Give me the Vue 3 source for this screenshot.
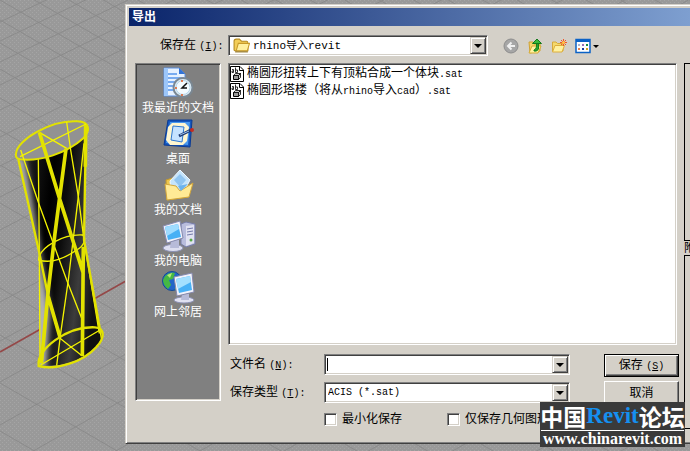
<script setup>
import { ref } from 'vue'

const files = [
  [{ t: '椭圆形扭转上下有顶粘合成一个体块' }, { t: '.sat', latin: true }],
  [
    { t: '椭圆形塔楼（将从' },
    { t: 'rhino', latin: true },
    { t: '导入' },
    { t: 'cad', latin: true },
    { t: '）' },
    { t: '.sat', latin: true },
  ],
]
const places = [
  { id: 'recent', name: '我最近的文档' },
  { id: 'desktop', name: '桌面' },
  { id: 'docs', name: '我的文档' },
  { id: 'computer', name: '我的电脑' },
  { id: 'network', name: '网上邻居' },
]
const fileName = ref('')

// Ground grid: spacing widens toward the viewer
const rising = []
for (let y = 22, step = 19; y < 900; y += step, step = Math.min(step + 2, 48)) {
  rising.push({ y1: y, y2: y - 690 * Math.min(0.47 + y / 4500, 0.57) })
}
const falling = []
for (let y = -400, step = 20; y < 460; y += step, step = y > 0 ? Math.min(step + 3, 48) : 20) {
  falling.push({ y1: y, y2: y + 690 * 0.58 })
}
</script>

<template>
  <div class="viewport">
    <svg class="ground" aria-hidden="true">
      <defs>
        <pattern id="grain" width="4" height="4" patternUnits="userSpaceOnUse">
          <rect width="1" height="1" fill="#a5a5a5" />
          <rect x="2" y="2" width="1" height="1" fill="#a5a5a5" />
        </pattern>
      </defs>
      <rect width="100%" height="100%" fill="#999" />
      <rect width="100%" height="100%" fill="url(#grain)" />
      <g stroke="#8b8b8b" stroke-width="1">
        <line v-for="(l, i) in rising" :key="'r' + i" x1="0" :y1="l.y1" x2="690" :y2="l.y2" />
        <line v-for="(l, i) in falling" :key="'f' + i" x1="0" :y1="l.y1" x2="690" :y2="l.y2" />
      </g>
      <line x1="0" y1="352" x2="140" y2="273" stroke="#944848" stroke-width="1.6" />
    </svg>

    <svg class="tower" viewBox="0 0 390 870" aria-hidden="true">
      <defs>
        <linearGradient id="shade" gradientUnits="userSpaceOnUse" x1="60" y1="430" x2="300" y2="460">
          <stop offset="0" stop-color="#1a1a1a" />
          <stop offset="0.3" stop-color="#000" />
          <stop offset="0.5" stop-color="#0c0c0c" />
          <stop offset="0.78" stop-color="#3c3c3c" />
          <stop offset="1" stop-color="#101010" />
        </linearGradient>
        <clipPath id="hull">
          <path d="M56 178 L118 460 L120 795 Q215 808 290 740 Q312 712 302 690 L252 420 L260 85 L200 145 Z" />
        </clipPath>
        <filter id="soft" x="-50%" y="-10%" width="200%" height="120%">
          <feGaussianBlur stdDeviation="9" />
        </filter>
      </defs>
      <g clip-path="url(#hull)">
        <rect x="40" y="60" width="280" height="760" fill="url(#shade)" />
        <path d="M40 170 L74 170 L122 460 L150 640 L140 810 L100 810 L110 460 Z" fill="#b4b4b4" filter="url(#soft)" />
      </g>
      <path class="cap" d="M48 160 C52 120 150 60 232 64 C270 66 272 90 250 115 C200 160 120 185 60 178 C50 176 46 170 48 160 Z" />
      <g class="wire thin">
        <path d="M60 170 L258 72 M118 97 L200 145 M200 66 L212 150 L235 290 L252 420 L298 700" />
        <path d="M62 150 L116 310 L200 540 L247 660" />
        <path d="M115 178 L118 460 L120 790" />
        <path d="M252 130 L235 290 L205 540 L182 700 L170 797" />
        <path d="M116 478 C120 440 190 402 248 405 C262 415 250 440 230 450 C190 478 150 490 116 480 Z" />
        <path d="M122 795 L300 690 L304 715 M180 715 L247 768" />
      </g>
      <g class="wire">
        <path d="M116 796 C108 750 200 678 285 682 C316 684 314 715 290 740 C250 785 170 812 116 798 Z" />
        <path d="M55 178 L116 450 L145 590 L180 712" />
        <path d="M258 75 L252 420 L302 700" />
      </g>
      <g class="wire thick">
        <path d="M118 97 L180 300 L250 520 M198 146 L165 400 L145 570 L124 790 M145 590 L180 712 M257 75 L256 200 M250 440 L247 768" />
      </g>
    </svg>

    <main class="dialog" role="dialog" aria-labelledby="dialog-title">
      <h1 id="dialog-title" class="title">导出</h1>
      <div class="toolbar">
        <label class="lookin" for="folder">保存在 <span class="latin">(<u>I</u>):</span></label>
        <div class="combo folder">
          <svg class="folder-icon" viewBox="0 0 16 14" aria-hidden="true">
            <path d="M1 3 Q1 1 3 1 H6 L8 3 H13 Q14 3 14 5 V12 H2 Q1 12 1 11Z" fill="#f3ce59" stroke="#b58a1e" />
            <path d="M3 12 L5 5 H15.5 L13.5 12Z" fill="#fff0a0" stroke="#c79a2b" />
            <path d="M2 13 H14" stroke="#8c6a14" />
          </svg>
          <select id="folder" class="sunken"><option>rhino导入revit</option></select>
          <span class="drop" aria-hidden="true"></span>
        </div>
        <div class="tools">
          <button class="tool" aria-label="后退">
            <svg viewBox="0 0 16 16"><circle cx="8" cy="8" r="7" fill="#a6a6a6" stroke="#8d8d8d" /><path d="M12 8H5M8.5 4.5L5 8L8.5 11.500" fill="none" stroke="#f0f0f0" stroke-width="2" /></svg>
          </button>
          <button class="tool" aria-label="向上一级">
            <svg viewBox="0 0 16 16"><path d="M2 4H6L7 6H13V13L3 15Z" fill="#f5d669" stroke="#d0a233" /><path d="M2 15L5 8H14L11 15Z" fill="#fff3a0" stroke="#d6aa34" /><path d="M7 12Q10 11 9.500 5.500H11.500V11Q10 14 7 13Z" fill="#2aa52a" stroke="#15801c" /><path d="M5.500 5.500L10 1L14.500 5.500Z" fill="#39b839" stroke="#14791b" /></svg>
          </button>
          <button class="tool" aria-label="新建文件夹">
            <svg viewBox="0 0 16 16"><path d="M1.500 4H5L6.500 5.500H12V13H1.500Z" fill="#f5d96d" stroke="#d6a93a" /><path d="M1.500 14L4 7.500H13.500L11 14Z" fill="#fff1a0" stroke="#dcae3d" /><path d="M12.500 1V8M9 4.500H16M10 2L15 7M15 2L10 7" stroke="#f0562b" /><circle cx="12.500" cy="4.500" r="1.500" fill="#ffc84a" /></svg>
          </button>
          <button class="tool views" aria-label="查看">
            <svg viewBox="0 0 24 16"><rect x="1" y="1.500" width="14" height="13" fill="#fff" stroke="#0b62c6" stroke-width="1.500" /><rect x="1" y="1" width="14" height="3" fill="#0b62c6" /><path d="M3 6h2v2h-2z" fill="#a9b4d4" /><path d="M7 6h2v2h-2z" fill="#9a72b8" /><path d="M11 6h2v2h-2z" fill="#149044" /><path d="M3 10h2v2h-2z" fill="#e8804c" /><path d="M7 10h2v2h-2z" fill="#163ea0" /><path d="M11 10h2v2h-2z" fill="#d5a520" /><path d="M18 7h6l-3 3z" fill="#000" /></svg>
          </button>
        </div>
      </div>

      <div class="body">
        <nav class="places" aria-label="位置">
          <button v-for="p in places" :key="p.id" class="place">
            <svg v-if="p.id === 'recent'" viewBox="0 0 32 32">
              <path d="M2 1H17L23 7V29H2Z" fill="#e6f1ff" stroke="#5a8fe0" /><path d="M2 1H6V29H2Z" fill="#9cc6fa" /><path d="M17 1V7H23Z" fill="#3273d6" />
              <path d="M6 7H15M6 11H20M6 15H15M6 19H12M6 23H12" stroke="#78abf0" stroke-width="2" />
              <circle cx="21" cy="20.500" r="9.500" fill="#dcebf5" stroke="#7a8792" stroke-width="2" /><circle cx="21" cy="20.500" r="7" fill="#f4fbff" stroke="#b4d4e8" />
              <path d="M25 16L20 21H25" fill="none" stroke="#111" stroke-width="1.500" /><path d="M20 13v2M20 27v2M13 21h2" stroke="#e35a20" stroke-width="1.500" />
            </svg>
            <svg v-else-if="p.id === 'desktop'" viewBox="0 0 32 32">
              <path d="M6 2H30L28 29L2 27Z" fill="#1558c0" stroke="#0a3a94" /><path d="M8 4H28L26 27L4 25Z" fill="#4a98ee" />
              <path d="M10 5H23L27 9L25 23L21 27H8L4 22L6 9Z" fill="#fff6d0" /><path d="M11 8L22 9L20 24L9 22Z" fill="#c5e2ff" stroke="#2e78d0" />
              <path d="M17 18L29 12" stroke="#1c3972" stroke-width="3" /><path d="M18 17L27 13" stroke="#9fc3ef" /><circle cx="30" cy="12" r="2" fill="#c52a20" />
            </svg>
            <svg v-else-if="p.id === 'docs'" viewBox="0 0 32 32">
              <path d="M4 11L14 8L26 13V28L5 31Z" fill="#edc64c" stroke="#c49a2d" /><path d="M8 12L18 1L28 11L21 24L9 22Z" fill="#c5e4fb" stroke="#eef8ff" /><path d="M12 11L18 5L24 11L18 18Z" fill="#8fc4f0" />
              <path d="M3 15L14 17L18 22L31 14L27 28L5 31Z" fill="#ffea95" stroke="#d2a63b" /><path d="M16 17L26 15L19 22Z" fill="#6bb3ed" />
            </svg>
            <svg v-else-if="p.id === 'computer'" viewBox="0 0 32 32">
              <path d="M19 4L24 2L33 4V24L24 27L19 24Z" fill="#b9bddd" stroke="#777da8" /><path d="M24 6L32 5V23L24 26Z" fill="#e1e2f2" /><path d="M25 9L31 8M25 12L31 11M25 15L31 14" stroke="#7178a8" /><circle cx="29" cy="20" r="1.500" fill="#55a846" />
              <ellipse cx="11" cy="28" rx="10" ry="3.500" fill="#dddff0" stroke="#8d92b5" /><path d="M9 20H17V28H8Z" fill="#b7bbd8" />
              <path d="M1 6L18 1L21 18L5 23Z" fill="#f0f1fa" stroke="#8589ad" /><path d="M3 7L16 4L19 17L6 20Z" fill="#46b0f5" /><path d="M3 7L16 4L17 9L5 16Z" fill="#9edcff" />
            </svg>
            <svg v-else viewBox="0 0 32 32">
              <circle cx="10" cy="10" r="9.500" fill="#2165c8" stroke="#134a96" /><path d="M3 5Q8 0 13 2L11 8L7 9L9 14L6 18Q1 14 1 9ZM13 9L19 7V16L13 19Z" fill="#45b844" /><path d="M5 4L10 2L8 7Z" fill="#b8ec77" />
              <ellipse cx="22" cy="29" rx="10" ry="3" fill="#e0e1f1" stroke="#8d92b5" /><path d="M20 23H27V29H19Z" fill="#b7bbd8" />
              <path d="M12 6L30 2L32 21L15 25Z" fill="#f1f2fb" stroke="#8589ad" /><path d="M14 8L28 5L30 19L17 22Z" fill="#48b1f6" /><path d="M14 8L28 5L29 11L16 18Z" fill="#a4e0ff" />
            </svg>
            <span>{{ p.name }}</span>
          </button>
        </nav>

        <div class="content">
          <ul class="files sunken">
            <li v-for="(f, i) in files" :key="i">
              <svg viewBox="0 0 14 16" aria-hidden="true">
                <path d="M.5 .5H10L13.500 4V15.500H.5Z" fill="#fff" stroke="#000" /><path d="M9.500 .5V4.500H13.500" fill="none" stroke="#000" />
                <path d="M2 3.500H3.500V6.500H2V5H3.500M5.500 1.500V6.500H7.500V4H5.500" fill="none" stroke="#000" stroke-width="0.8" />
                <path d="M3.500 9.500H8.500V13.500H3.500Z" fill="#999" stroke="#000" />
                <path d="M3.500 9.500L5.500 7.500H10.500L8.500 9.500ZM10.500 7.500V11.500L8.500 13.500V9.500Z" fill="#ccc" stroke="#000" stroke-width="0.8" />
              </svg>
              <span><span v-for="(s, j) in f" :key="j" :class="{ latin: s.latin }">{{ s.t }}</span></span>
            </li>
          </ul>

          <form class="form" @submit.prevent>
            <div class="fields">
              <div class="row">
                <label for="fname">文件名 <span class="latin">(<u>N</u>):</span></label>
                <div class="combo">
                  <input id="fname" v-model="fileName" class="sunken" type="text" autofocus />
                  <span class="caret" aria-hidden="true"></span>
                  <span class="drop" aria-hidden="true"></span>
                </div>
              </div>
              <div class="row">
                <label for="ftype">保存类型 <span class="latin">(<u>T</u>):</span></label>
                <div class="combo type">
                  <select id="ftype" class="sunken"><option>ACIS (*.sat)</option></select>
                  <span class="drop" aria-hidden="true"></span>
                </div>
              </div>
              <div class="checks">
                <label><input type="checkbox" />最小化保存</label>
                <label><input type="checkbox" />仅保存几何图形</label>
              </div>
            </div>
            <div class="actions">
              <button class="push default" type="submit">保存 <span class="latin">(<u>S</u>)</span></button>
              <button class="push" type="button">取消</button>
            </div>
          </form>
        </div>

        <aside class="options">
          <div class="frame upper"></div>
          <span class="caption">附</span>
          <div class="frame lower"></div>
        </aside>
      </div>
    </main>

    <div class="watermark">
      <div class="brand">中国<span>Revit</span>论坛</div>
      <div class="url">www.chinarevit.com</div>
    </div>
  </div>
</template>

<style>
body {
  margin: 0;
}
</style>

<style scoped>
* {
  box-sizing: border-box;
}
.viewport {
  position: relative;
  min-height: 100vh;
  padding: 4px 0 8px 125px;
  overflow: hidden;
  background: #999;
  color: #000;
  font: 12px/16px "Liberation Sans", "Noto Sans CJK SC", sans-serif;
}
.ground {
  position: absolute;
  inset: 0;
  width: 100%;
  height: 100%;
}
.tower {
  position: absolute;
  left: 0;
  top: 100px;
  width: 130px;
  height: 290px;
}
.cap {
  fill: #929292;
  stroke: #e2e200;
  stroke-width: 6;
}
.wire {
  fill: none;
  stroke: #e2e200;
  stroke-width: 7;
}
.wire.thin {
  stroke: #f4f400;
  stroke-width: 4;
}
.wire.thick {
  stroke-width: 11;
}
.latin {
  font-family: "Liberation Mono", monospace;
  font-size: 10px;
}
.dialog {
  position: relative;
  padding: 2px 0 0 2px;
  overflow: hidden;
  background: #d4d0c8;
  border-top: 1px solid #d4d0c8;
  border-left: 1px solid #d4d0c8;
  border-bottom: 1px solid #404040;
  box-shadow: inset 1px 1px #fff, inset 0 -1px #808080;
}
.title {
  margin: 1px 0 0 1px;
  padding: 0 3px;
  font-size: 12px;
  line-height: 18px;
  color: #fff;
  background: linear-gradient(90deg, #0a246a, #7e9fd0);
}
.toolbar {
  display: flex;
  align-items: center;
  height: 37px;
  padding: 2px 0 0 32px;
}
.lookin {
  flex: 0 0 68px;
  white-space: nowrap;
}
.combo {
  position: relative;
  display: flex;
  flex: 1;
}
.combo.folder {
  flex: 0 1 260px;
}
.folder-icon {
  position: absolute;
  left: 5px;
  top: 3px;
  width: 17px;
  height: 15px;
}
.sunken {
  background: #fff;
  border: 1px solid;
  border-color: #808080 #fff #fff #808080;
  border-radius: 0;
  box-shadow: inset 1px 1px #404040, inset -1px -1px #d4d0c8;
}
select,
input[type="text"] {
  appearance: none;
  width: 100%;
  height: 21px;
  padding: 0 20px 0 3px;
  font: 10px "Liberation Mono", "Noto Sans CJK SC", monospace;
  color: #000;
  outline: 0;
  caret-color: transparent;
}
.folder select {
  padding-left: 24px;
  font-size: 11px;
}
.caret {
  position: absolute;
  left: 3px;
  top: 4px;
  width: 1px;
  height: 13px;
  background: #000;
}
.drop {
  position: absolute;
  right: 2px;
  top: 2px;
  display: grid;
  place-items: center;
  width: 16px;
  height: 17px;
  background: #d4d0c8;
  border: 1px solid;
  border-color: #d4d0c8 #404040 #404040 #d4d0c8;
  box-shadow: inset 1px 1px #fff, inset -1px -1px #808080;
  pointer-events: none;
}
.drop::before {
  content: "";
  border: 4px solid transparent;
  border-top-color: #000;
  border-bottom: 0;
}
.tools {
  display: flex;
  gap: 8px;
  margin-left: 15px;
}
.tool {
  width: 16px;
  height: 16px;
  padding: 0;
  background: none;
  border: 0;
}
.tool.views {
  width: 24px;
}
.tool svg {
  display: block;
  width: 100%;
  height: 100%;
}
.body {
  display: grid;
  grid-template-columns: 86px minmax(0, 1fr) 6px;
  column-gap: 7px;
  padding: 0 0 14px 7px;
}
.places {
  display: flex;
  flex-direction: column;
  gap: 3px;
  height: 338px;
  padding-top: 3px;
  background: #808080;
  border: 1px solid;
  border-color: #808080 #fff #fff #808080;
  box-shadow: inset 1px 1px #404040, inset -1px -1px #d4d0c8;
}
.place {
  display: flex;
  flex-direction: column;
  align-items: center;
  gap: 2px;
  padding: 0;
  color: #fff;
  background: none;
  border: 0;
  font: inherit;
  line-height: 14px;
  white-space: nowrap;
}
.place svg {
  width: 32px;
  height: 32px;
  overflow: visible;
}
.files {
  height: 282px;
  margin: 0;
  padding: 1px;
  list-style: none;
}
.files li {
  display: flex;
  align-items: center;
  gap: 3px;
  height: 17px;
  white-space: nowrap;
}
.files svg {
  width: 14px;
  height: 16px;
}
.form {
  display: flex;
  gap: 34px;
  padding-top: 9px;
}
.fields {
  display: flex;
  flex: 1;
  flex-direction: column;
  gap: 7px;
}
.row {
  display: flex;
  align-items: center;
}
.row label {
  flex: 0 0 96px;
  padding-left: 2px;
}
.checks {
  display: grid;
  grid-template-columns: 123px 123px;
  padding: 1px 0 0 96px;
}
.checks label {
  display: flex;
  align-items: center;
  gap: 5px;
  white-space: nowrap;
}
.checks input {
  appearance: none;
  flex: none;
  width: 13px;
  height: 13px;
  margin: 0;
  background: #fff;
  border: 1px solid;
  border-color: #808080 #fff #fff #808080;
  box-shadow: inset 1px 1px #404040, inset -1px -1px #d4d0c8;
}
.actions {
  display: flex;
  flex: 0 0 75px;
  flex-direction: column;
  gap: 4px;
}
.push {
  height: 23px;
  padding: 0;
  color: #000;
  background: #d4d0c8;
  border: 1px solid;
  border-color: #fff #404040 #404040 #fff;
  box-shadow: inset -1px -1px #808080;
  font: inherit;
}
.push.default {
  border-color: #000;
  box-shadow: inset 1px 1px #fff, inset -1px -1px #404040, inset -2px -2px #808080;
}
.options {
  display: flex;
  flex-direction: column;
  height: 366px;
  overflow: hidden;
}
.frame {
  border: 1px solid #000;
  border-right: 0;
}
.upper {
  flex: 178;
}
.lower {
  flex: 174;
}
.caption {
  width: 12px;
  line-height: 14px;
}
.watermark {
  position: absolute;
  right: 5px;
  bottom: 5px;
  width: 145px;
  padding: 0 1px;
  background: #3a3a3a;
  color: #fff;
  white-space: nowrap;
}
.brand {
  display: flex;
  justify-content: center;
  border-bottom: 1px solid #fff;
  font: 700 23px/28px "Noto Sans CJK SC", sans-serif;
}
.brand span {
  color: #1590f0;
  font-family: "Liberation Serif", serif;
}
.url {
  text-align: center;
  font: 700 16px/16px "Liberation Serif", serif;
}
</style>
